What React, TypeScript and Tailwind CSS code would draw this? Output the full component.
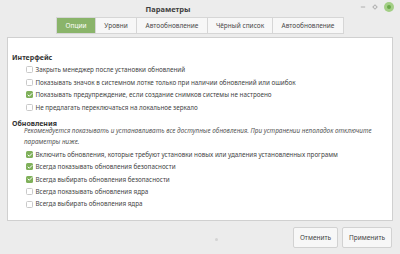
import { Minus, Check } from 'lucide-react';

const tabs = ['Опции', 'Уровни', 'Автообновление', 'Чёрный список', 'Автообновление'];

const interfaceItems = [
    { label: 'Закрыть менеджер после установки обновлений', checked: false },
    { label: 'Показывать значок в системном лотке только при наличии обновлений или ошибок', checked: false },
    { label: 'Показывать предупреждение, если создание снимков системы не настроено', checked: true },
    { label: 'Не предлагать переключаться на локальное зеркало', checked: false },
];

const updateItems = [
    { label: 'Включить обновления, которые требуют установки новых или удаления установленных программ', checked: true },
    { label: 'Всегда показывать обновления безопасности', checked: true },
    { label: 'Всегда выбирать обновления безопасности', checked: true },
    { label: 'Всегда показывать обновления ядра', checked: false },
    { label: 'Всегда выбирать обновления ядра', checked: false },
];

function Box({ checked }: { checked: boolean }) {
    if (checked) {
        return (
            <span className="flex h-[7px] w-[7px] shrink-0 items-center justify-center rounded-[1.5px] bg-[#7fb05a]">
                <Check className="h-[6px] w-[6px] text-white" strokeWidth={4} />
            </span>
        );
    }
    return <span className="h-[7px] w-[7px] shrink-0 rounded-[1.5px] border border-[#c9c9c9] bg-white" />;
}

function Row({ label, checked, h }: { label: string; checked: boolean; h: string }) {
    return (
        <div className={`flex items-center gap-[2.5px] pl-[18px] ${h}`}>
            <Box checked={checked} />
            <span className="whitespace-nowrap">{label}</span>
        </div>
    );
}

export default function App() {
    return (
        <div className="flex h-[254px] w-[400px] flex-col bg-[#ececec] text-[#3c3c3c] [font-family:'Noto_Sans',sans-serif]">
            {/* заголовок окна */}
            <div className="relative flex h-[15px] items-end justify-center">
                <span className="mr-[64px] text-[7.5px] font-bold text-[#404040]">Параметры</span>
                <div className="absolute right-[6px] top-[2px] flex items-center gap-[7px]">
                    <Minus className="h-[6px] w-[6px] text-[#8a8a8a]" strokeWidth={2.5} />
                    <span className="h-[4px] w-[4px] rotate-45 border border-[#b0b0b0]" />
                    <span className="flex h-[10px] w-[10px] items-center justify-center rounded-full bg-[#a3cf86]">
                        <span className="h-[4px] w-[4px] rounded-full bg-[#6aa84a]" />
                    </span>
                </div>
            </div>

            {/* вкладки */}
            <div className="mt-[2px] flex justify-center">
                <div className="flex h-[17px] border border-[#d6d6d6] text-[6.5px]">
                    {tabs.map((t, i) => (
                        <div
                            key={i}
                            className={`flex items-center justify-center border-r border-[#d6d6d6] last:border-r-0 ${
                                i === 0 ? 'w-[39px] bg-[#8ab46a] text-white' : 'bg-[#f7f7f7] text-[#4a4a4a]'
                            } ${i === 1 ? 'w-[41px]' : ''} ${i === 2 ? 'w-[71px]' : ''} ${i === 3 ? 'w-[65px]' : ''} ${i === 4 ? 'w-[70px]' : ''}`}
                        >
                            {t}
                        </div>
                    ))}
                </div>
            </div>

            {/* основной блок */}
            <div className="mx-[7px] mt-[3px] h-[184px] border border-[#d0d0d0] bg-white pt-[15px] text-[6.3px] text-[#444]">
                <div className="pl-[4px] text-[7px] font-bold text-[#333]">Интерфейс</div>
                <div>
                    {interfaceItems.map((r) => (
                        <Row key={r.label} {...r} h="h-[12.6px]" />
                    ))}
                </div>
                <div className="mt-[5px] pl-[4px] text-[7px] font-bold text-[#333]">Обновления</div>
                <div className="mt-[-4px] pl-[16px] pr-[6px] text-[6.4px] italic leading-[11px] text-[#555]">
                    Рекомендуется показывать и устанавливать все доступные обновления. При устранении неполадок отключите
                    параметры ниже.
                </div>
                <div className="mt-[1px]">
                    {updateItems.map((r) => (
                        <Row key={r.label} {...r} h="h-[12.4px]" />
                    ))}
                </div>
            </div>

            {/* кнопки */}
            <div className="relative flex flex-1 items-center justify-end gap-[4px] pr-[8px]">
                <span className="absolute left-[215px] top-[17px] h-[3px] w-[3px] rounded-full bg-[#d4d4d4]" />
                <button className="h-[21px] w-[45px] rounded-[2px] border border-[#d2d2d2] bg-[#f7f7f7] text-[6.5px] text-[#444]">
                    Отменить
                </button>
                <button className="h-[21px] w-[50px] rounded-[2px] border border-[#d2d2d2] bg-[#f7f7f7] text-[6.5px] text-[#444]">
                    Применить
                </button>
            </div>
        </div>
    );
}
